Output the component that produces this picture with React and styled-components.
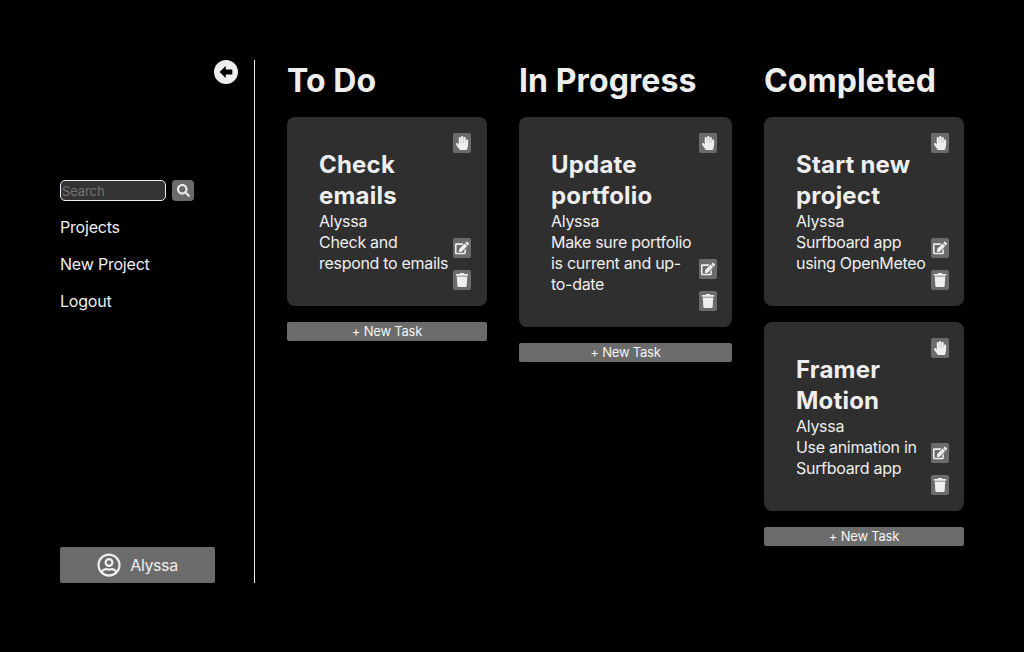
import React from 'react';
import styled, { createGlobalStyle } from 'styled-components';
import { FaEdit, FaHandPaper, FaRegUserCircle, FaSearch, FaTrash } from 'react-icons/fa';

const columns = [
  {
    title: 'To Do',
    width: 200,
    inset: 16,
    tasks: [{ title: 'Check emails', owner: 'Alyssa', text: 'Check and respond to emails' }],
  },
  {
    title: 'In Progress',
    width: 213,
    inset: 15,
    tasks: [{ title: 'Update portfolio', owner: 'Alyssa', text: 'Make sure portfolio is current and up-to-date' }],
  },
  {
    title: 'Completed',
    width: 200,
    inset: 15,
    tasks: [
      { title: 'Start new project', owner: 'Alyssa', text: 'Surfboard app using OpenMeteo' },
      { title: 'Framer Motion', owner: 'Alyssa', text: 'Use animation in Surfboard app' },
    ],
  },
];

const BackIcon = () => (
  <svg width="24" height="24" viewBox="0 0 24 24" fill="currentColor">
    <path
      fillRule="evenodd"
      d="M12 0a12 12 0 1 1 0 24a12 12 0 0 1 0-24ZM5.6 12l6.1 6v-3.4h6.6V9.4h-6.6V6Z"
    />
  </svg>
);

const App = () => (
  <>
    <GlobalStyle />
    <Page>
      <Sidebar>
        <CollapseButton><BackIcon /></CollapseButton>
        <SearchRow>
          <SearchInput placeholder="Search" />
          <SearchButton><FaSearch /></SearchButton>
        </SearchRow>
        <NavLink>Projects</NavLink>
        <NavLink>New Project</NavLink>
        <NavLink>Logout</NavLink>
        <UserButton>
          <FaRegUserCircle />
          <span>Alyssa</span>
        </UserButton>
      </Sidebar>
      <Board>
        {columns.map((column) => (
          <Column key={column.title} $width={column.width}>
            <ColumnTitle>{column.title}</ColumnTitle>
            {column.tasks.map((task) => (
              <Card key={task.title} $inset={column.inset}>
                <CardText>
                  <TaskTitle>{task.title}</TaskTitle>
                  <TaskLine>{task.owner}</TaskLine>
                  <TaskLine>{task.text}</TaskLine>
                </CardText>
                <CardActions>
                  <ActionButton><FaHandPaper /></ActionButton>
                  <ActionGroup>
                    <ActionButton><FaEdit /></ActionButton>
                    <ActionButton><FaTrash /></ActionButton>
                  </ActionGroup>
                </CardActions>
              </Card>
            ))}
            <NewTaskButton>+ New Task</NewTaskButton>
          </Column>
        ))}
      </Board>
    </Page>
  </>
);

const GlobalStyle = createGlobalStyle`
  html, body {
    margin: 0;
    background: #000;
  }

  body {
    font-family: "Inter", "Liberation Sans", sans-serif;
    color: #eeeeee;
  }
`;

const Page = styled.div`
  display: flex;
  align-items: flex-start;
  box-sizing: border-box;
  height: 652px;
  padding: 60px;
  background: #000;
`;

const Sidebar = styled.aside`
  display: flex;
  flex-direction: column;
  align-items: flex-start;
  box-sizing: border-box;
  width: 195px;
  height: 523px;
  flex-shrink: 0;
  border-right: 1px solid #eeeeee;
`;

const CollapseButton = styled.div`
  align-self: flex-end;
  display: flex;
  margin: 0 16px 96px 0;
  color: #eeeeee;
`;

const SearchRow = styled.div`
  display: flex;
  gap: 6px;
  margin-bottom: 16px;
`;

const SearchInput = styled.input`
  box-sizing: border-box;
  width: 106px;
  height: 21px;
  padding: 0 1px;
  border: 1px solid #eeeeee;
  border-radius: 5px;
  background: #333333;
  font: 13px "Inter", "Liberation Sans", sans-serif;
  letter-spacing: -0.1px;
  color: #eeeeee;
  outline: none;

  &::placeholder {
    color: #757575;
  }
`;

const SearchButton = styled.div`
  display: flex;
  align-items: center;
  justify-content: center;
  width: 22px;
  height: 21px;
  border-radius: 4px;
  background: #6b6b6b;
  font-size: 13px;
  color: #eeeeee;
`;

const NavLink = styled.div`
  margin-bottom: 16px;
  font-size: 16px;
  line-height: 21px;
  letter-spacing: -0.2px;
  color: #eeeeee;
`;

const UserButton = styled.div`
  display: flex;
  align-items: center;
  justify-content: center;
  gap: 9px;
  width: 155px;
  height: 36px;
  margin-top: auto;
  border-radius: 2px;
  background: #6b6b6b;
  font-size: 16px;
  letter-spacing: -0.4px;
  color: #eeeeee;

  svg {
    font-size: 24px;
  }
`;

const Board = styled.main`
  display: flex;
  gap: 32px;
  padding-left: 32px;
`;

const Column = styled.section`
  display: flex;
  flex-direction: column;
  gap: 16px;
  width: ${(props) => props.$width}px;
`;

const ColumnTitle = styled.h2`
  margin: 0;
  font-size: 32px;
  line-height: 41px;
  font-weight: 700;
  letter-spacing: 0.1px;
  color: #eeeeee;
`;

const Card = styled.article`
  display: flex;
  justify-content: space-between;
  padding: 16px ${(props) => props.$inset}px 16px 16px;
  border-radius: 8px;
  background: #2f2f2f;
`;

const CardText = styled.div`
  padding: 16px 0 16px 16px;
  flex: 1;
  min-width: 0;
`;

const TaskTitle = styled.h3`
  margin: 0;
  font-size: 24px;
  line-height: 31px;
  font-weight: 700;
  letter-spacing: 0.2px;
  color: #eeeeee;
`;

const TaskLine = styled.div`
  font-size: 16px;
  line-height: 21px;
  letter-spacing: -0.3px;
  color: #eeeeee;
`;

const CardActions = styled.div`
  display: flex;
  flex-direction: column;
  justify-content: space-between;
  flex-shrink: 0;
  margin-left: 2px;
`;

const ActionGroup = styled.div`
  display: flex;
  flex-direction: column;
  gap: 12px;
`;

const ActionButton = styled.div`
  display: flex;
  align-items: center;
  justify-content: center;
  width: 18px;
  height: 20px;
  border-radius: 2px;
  background: #6b6b6b;
  font-size: 14px;
  color: #eeeeee;

  svg {
    max-width: 14px;
  }
`;

const NewTaskButton = styled.div`
  height: 19px;
  border-radius: 2px;
  background: #6b6b6b;
  font-size: 13px;
  line-height: 19px;
  letter-spacing: -0.2px;
  text-align: center;
  color: #f4f4f4;
`;

export default App;
